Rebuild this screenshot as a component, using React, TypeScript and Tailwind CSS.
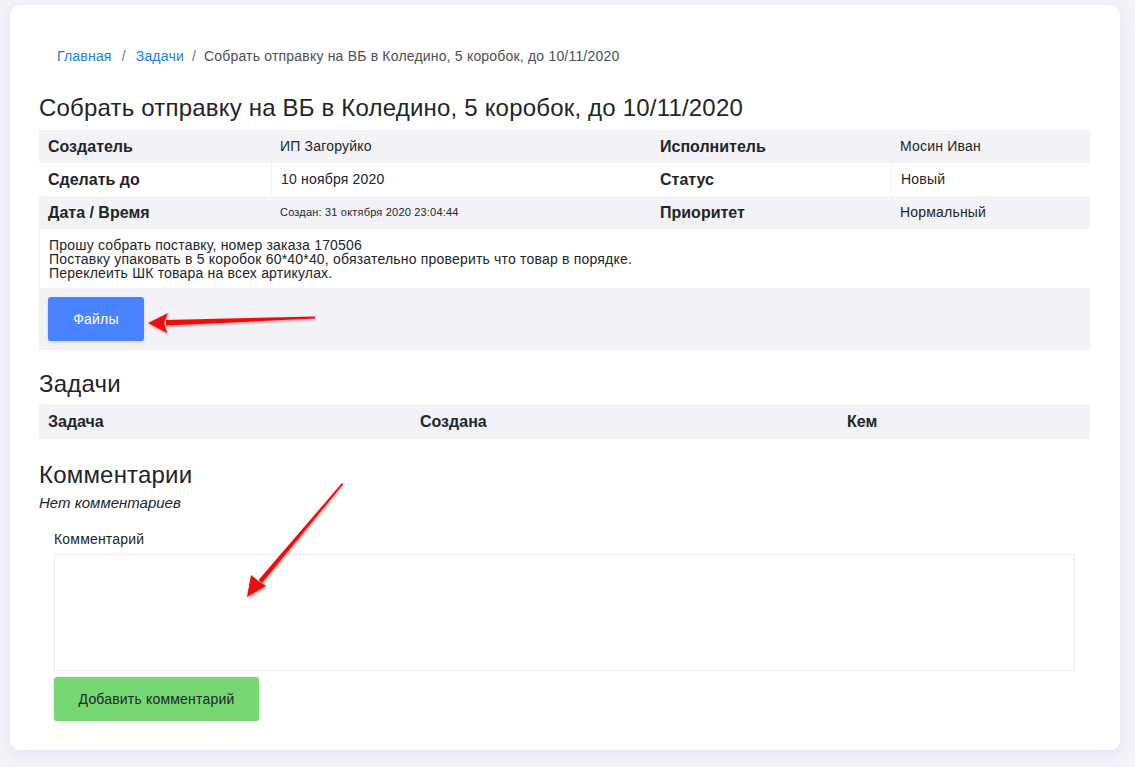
import React from 'react'

const font = { fontFamily: '"Liberation Sans", Arial, sans-serif' }

function InfoRow({ label, value, label2, value2, gray, small }: { label: string; value: string; label2: string; value2: string; gray?: boolean; small?: boolean }) {
  return (
    <div className={`grid grid-cols-[232px_380px_240px_1fr] h-[33px] ${gray ? 'bg-[#f2f2f7]' : 'bg-white'}`}>
      <div className="flex items-center px-[9px] text-[16px] font-bold tracking-normal text-[#212529]">{label}</div>
      <div className={`flex items-center px-[9px] text-[#212529] ${small ? 'text-[11px]' : 'text-[14px]'} ${gray ? '' : 'border-l border-[#f2f2f7]'}`}>{value}</div>
      <div className="flex items-center px-[9px] text-[16px] font-bold tracking-normal text-[#212529]">{label2}</div>
      <div className={`flex items-center px-[9px] text-[14px] text-[#212529] ${gray ? '' : 'border-l border-[#f2f2f7]'}`}>{value2}</div>
    </div>
  )
}

export default function App() {
  return (
    <div className="relative min-h-[767px] bg-[#f3f3f9] pl-[10px] pr-[15px] pt-[5px] pb-[17px] tracking-[0.012em]" style={font}>
      <div className="rounded-[10px] bg-white pt-[41px] pl-[29px] pr-[30px] pb-[29px] shadow-[0_4px_14px_rgba(120,110,220,0.12)]">
        {/* breadcrumb */}
        <div className="flex h-5 items-center px-[18px] text-[14px] text-[#495057]">
          <span className="text-[#1a7de8]">Главная</span>
          <span className="px-[10px] text-[#6c757d]">/</span>
          <span className="text-[#1a7de8]">Задачи</span>
          <span className="px-[8px] text-[#6c757d]">/</span>
          <span>Собрать отправку на ВБ в Коледино, 5 коробок, до 10/11/2020</span>
        </div>

        <h1 className="mt-[28px] mb-[8px] text-[24px] leading-[28px] text-[#212529]">
          Собрать отправку на ВБ в Коледино, 5 коробок, до 10/11/2020
        </h1>

        <div>
          <InfoRow gray label="Создатель" value="ИП Загоруйко" label2="Исполнитель" value2="Мосин Иван" />
          <InfoRow label="Сделать до" value="10 ноября 2020" label2="Статус" value2="Новый" />
          <InfoRow gray small label="Дата / Время" value="Создан: 31 октября 2020 23:04:44" label2="Приоритет" value2="Нормальный" />
          <div className="border-l border-[#f2f2f7] bg-white px-[9px] pt-[9px] pb-[8px] text-[14px] leading-[14px] text-[#212529]">
            <div>Прошу собрать поставку, номер заказа 170506</div>
            <div>Поставку упаковать в 5 коробок 60*40*40, обязательно проверить что товар в порядке.</div>
            <div>Переклеить ШК товара на всех артикулах.</div>
          </div>
          <div className="bg-[#f2f2f7] px-[9px] py-[9px]">
            <button className="h-[44px] w-[96px] rounded-[3px] bg-[#4a83ff] text-[14px] text-white shadow-[0_1px_3px_rgba(0,0,0,0.15)]">
              Файлы
            </button>
          </div>
        </div>

        <h2 className="mt-[20px] mb-[6px] text-[24px] leading-[28px] text-[#212529]">Задачи</h2>
        <div className="grid h-[35px] grid-cols-[372px_427px_1fr] items-center bg-[#f2f2f7] px-[9px] text-[16px] font-bold tracking-normal text-[#212529]">
          <div>Задача</div>
          <div>Создана</div>
          <div>Кем</div>
        </div>

        <h2 className="mt-[22px] text-[24px] leading-[28px] text-[#212529]">Комментарии</h2>
        <p className="mt-[4px] text-[15px] leading-5 italic tracking-normal text-[#212529]">Нет комментариев</p>

        <div className="mt-[16px] pl-[15px] pr-[15px]">
          <label className="block text-[14px] leading-5 text-[#212529]">Комментарий</label>
          <textarea className="mt-[5px] block h-[117px] w-full resize-none border border-[#ececec] bg-white outline-none" />
          <button className="mt-[6px] h-[44px] w-[205px] rounded-[3px] bg-[#76d873] text-[14px] text-[#212529] shadow-[0_1px_3px_rgba(0,0,0,0.12)]">
            Добавить комментарий
          </button>
        </div>
      </div>

      {/* annotation arrows */}
      <svg className="pointer-events-none absolute left-0 top-0" width="1135" height="767">
        <defs>
          <filter id="sh" x="-20%" y="-20%" width="140%" height="140%">
            <feDropShadow dx="1" dy="1.5" stdDeviation="1" floodColor="#000" floodOpacity="0.35" />
          </filter>
        </defs>
        <g filter="url(#sh)" fill="#ee0d0d">
          <polygon points="315,316.5 315,318.5 166,325.5 166,320" />
          <polygon points="148,323 168,313 164,322.5 167,333" />
          <polygon points="342,483 343,484.5 262,583 258.5,580" />
          <polygon points="247,597 251,575 259,581.5 266,586" />
        </g>
      </svg>
    </div>
  )
}
